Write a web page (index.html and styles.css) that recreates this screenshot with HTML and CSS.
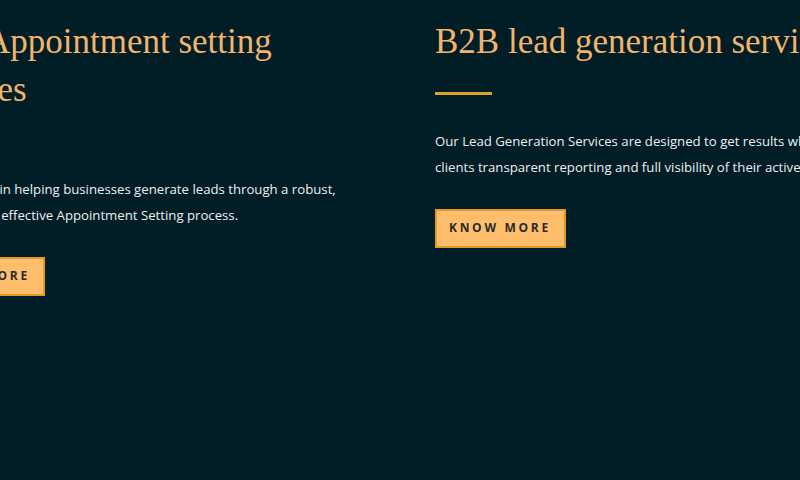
FILE: index.html
```html
<!DOCTYPE html>
<html lang="en">
<head>
<meta charset="utf-8">
<title>Services</title>
<link rel="stylesheet" href="styles.css">
</head>
<body>
<div class="viewport">
  <section class="services">
    <article class="service">
      <h2 class="service-title">B2B Appointment setting services</h2>
      <div class="service-rule"></div>
      <p class="service-text">We specialize in helping businesses generate leads through a robust, trackable and effective Appointment Setting process.</p>
      <a class="service-btn" href="#">Know more</a>
    </article>
    <article class="service">
      <h2 class="service-title">B2B lead generation services</h2>
      <div class="service-rule"></div>
      <p class="service-text">Our Lead Generation Services are designed to get results while giving clients transparent reporting and full visibility of their active campaigns.</p>
      <a class="service-btn" href="#">Know more</a>
    </article>
  </section>
</div>
</body>
</html>
```
FILE: styles.css
```css
html, body {
  margin: 0;
  padding: 0;
  background: #011d26;
  height: 100%;
  overflow: hidden;
}
.viewport {
  width: 800px;
  height: 480px;
  overflow: hidden;
}
.services {
  display: grid;
  grid-template-columns: 450px 450px;
  column-gap: 71px;
  margin-left: -86px;
  padding-top: 18px;
  align-items: start;
}
.service {
  display: flex;
  flex-direction: column;
  align-items: flex-start;
}
.service-title {
  margin: 0;
  font-family: "Liberation Serif", serif;
  font-weight: normal;
  font-size: 35px;
  line-height: 48px;
  color: #f2b46c;
}
.service-rule {
  width: 57px;
  height: 3px;
  background: #dba229;
  margin-top: 26px;
}
.service-text {
  margin: 33px 0 0;
  font-family: "Open Sans", sans-serif;
  font-size: 13.2px;
  line-height: 26px;
  color: #eef0f0;
}
.service-btn {
  margin-top: 29px;
  display: inline-block;
  padding: 10px 13px 11px 12px;
  background: #ffbe6b;
  border: 2px solid #e0982a;
  color: #2a2a2a;
  font-family: "Open Sans", sans-serif;
  font-weight: 700;
  font-size: 12px;
  line-height: 14px;
  letter-spacing: 2.7px;
  text-transform: uppercase;
  text-decoration: none;
}
```
